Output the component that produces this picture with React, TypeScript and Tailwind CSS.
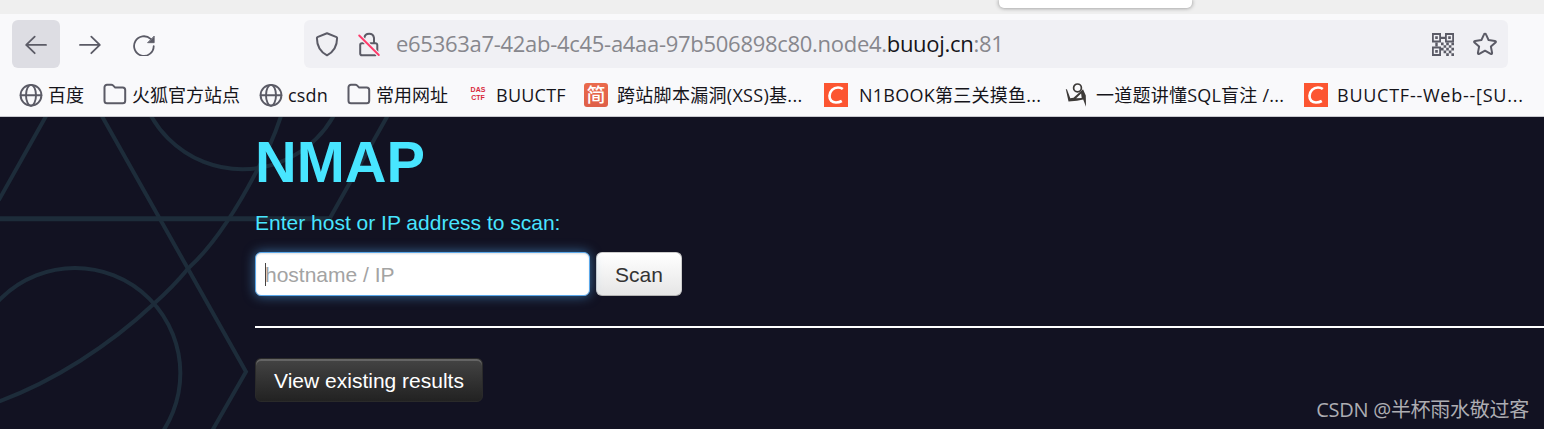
import React from "react";

const stroke = {
  fill: "none",
  stroke: "#5b5b66",
  strokeWidth: 2,
  strokeLinecap: "round" as const,
  strokeLinejoin: "round" as const,
};

const BackIcon = () => (
  <svg width="24" height="24" viewBox="0 0 24 24" {...stroke} strokeWidth={1.8}>
    <path d="M22 12.900H2.200M10.700 4.600L2.200 12.900l8.500 8.300" />
  </svg>
);

const ForwardIcon = () => (
  <svg width="24" height="24" viewBox="0 0 24 24" {...stroke} strokeWidth={1.8}>
    <path d="M2 12.900h19.800M13.300 4.600l8.500 8.300-8.500 8.300" />
  </svg>
);

const ReloadIcon = () => (
  <svg width="24" height="24" viewBox="0 0 24 24" {...stroke} strokeWidth={1.8}>
    <path d="M18.600 6.900A9.800 9.800 0 1 0 21.700 14.200" />
    <path d="M22.200 4.400v6.300h-6.300z" fill="#5b5b66" strokeWidth={0.8} />
  </svg>
);

const ShieldIcon = () => (
  <svg width="24" height="26" viewBox="0 0 24 26" {...stroke}>
    <path d="M12 2.300L21.600 6.100q.5.200.5.800C22.100 14.300 18.500 20.800 12 24.300 5.500 20.800 1.900 14.300 1.900 6.900q0-.6.500-.8z" />
  </svg>
);

const LockIcon = () => (
  <svg width="24" height="26" viewBox="0 0 24 26" {...stroke}>
    <path d="M7 12.200H5a1.800 1.800 0 0 0-1.800 1.800v8.400A1.800 1.800 0 0 0 5 24.200h13.500M13.500 12.200h5a1.800 1.800 0 0 1 1.800 1.800v6.500M7.300 7a4.900 4.900 0 0 1 9.700 0v5" />
    <path d="M2.200 4.500l19.600 19.500" stroke="#f0f0f4" strokeWidth="4" />
    <path d="M2.200 4.500l19.600 19.500" stroke="#ff3b6b" strokeWidth="1.900" />
  </svg>
);

const QrIcon = () => (
  <svg width="22" height="23" viewBox="0 0 22 22" fill="#5b5b66" preserveAspectRatio="none">
    <path
      fillRule="evenodd"
      d="M0 0h9v9H0zM1.800 1.800v5.400h5.400V1.800zM13 0h9v9h-9zM14.800 1.800v5.400h5.400V1.800zM0 13h9v9H0zM1.800 14.800v5.400h5.400v-5.400z"
    />
    <path d="M3.200 3.200h2.600v2.600H3.200zM16.200 3.200h2.600v2.600h-2.600zM3.200 16.200h2.600v2.600H3.200zM9 3.600h4v2.200H9zM3.300 9h2.400v4H3.300z" />
    <path d="M9 9h2.600v2.600H9zM14.200 9h2.600v2.600h-2.600zM19.400 9H22v2.600h-2.600zM11.600 11.600h2.600v2.600h-2.600zM16.800 11.600h2.600v2.600h-2.600zM9 14.200h2.600v2.600H9zM14.200 14.200h2.600v2.600h-2.600zM19.400 14.200H22v2.600h-2.600zM11.600 16.800h2.600v2.600h-2.600zM16.800 16.800h2.600v2.600h-2.600zM14.200 19.400h2.600V22h-2.600zM19.400 19.400H22V22h-2.600z" />
  </svg>
);

const StarIcon = () => (
  <svg width="26" height="26" viewBox="0 0 26 26" {...stroke}>
    <path d="M13 2.800q.8 0 1.100.8l2.500 5.500 6.300.8q1.700.4.600 1.600l-4.600 4.100 1.200 6.300q.1 1.500-1.400 1l-5.700-3.200-5.700 3.200q-1.500.5-1.400-1l1.200-6.300-4.600-4.100q-1.100-1.200.6-1.600l6.300-.8 2.500-5.500q.3-.8 1.100-.8z" />
  </svg>
);

const GlobeIcon = () => (
  <svg width="24" height="24" viewBox="0 0 24 24" {...stroke} strokeWidth={1.9}>
    <circle cx="12" cy="12.300" r="10.400" />
    <ellipse cx="12" cy="12.300" rx="5" ry="10.400" />
    <path d="M1.600 12.300h20.800" />
  </svg>
);

const FolderIcon = () => (
  <svg width="24" height="24" viewBox="0 0 24 24" {...stroke}>
    <path d="M1.500 17.800V4.200a2.500 2.500 0 0 1 2.500-2.500h4.300q1 0 1.700.7l2.200 2.200h7.500a2.500 2.500 0 0 1 2.500 2.500v10.700a2.500 2.500 0 0 1-2.500 2.500H4a2.500 2.500 0 0 1-2.500-2.500z" />
  </svg>
);

const DasIcon = () => (
  <span className="flex h-6 w-6 flex-col items-center justify-center pb-0.5 font-['Liberation_Sans',sans-serif] text-[7px] leading-[8px] font-bold text-[#d8283c]">
    <span>DAS</span>
    <span>CTF</span>
  </span>
);

const JianIcon = () => (
  <span className="flex h-6 w-6 items-center justify-center rounded-[3px] bg-linear-to-b from-[#ea6a4c] to-[#de5f48] pb-0.5 font-['Noto_Sans_CJK_SC',sans-serif] text-[19px] leading-5 font-medium text-white">
    简
  </span>
);

const CIcon = () => (
  <svg width="24" height="24" viewBox="0 0 24 24">
    <path fill="#fc5531" d="M0 0h24v24H0z" />
    <path
      d="M18.800 6C17.500 5 15.800 4.500 14 4.500 9.300 4.500 5.700 8 5.500 12.900 5.400 17 8 19.500 12 19.500c2.300 0 4-.5 5.800-1.500"
      fill="none"
      stroke="#fff"
      strokeWidth="2.700"
    />
  </svg>
);

const FigureIcon = () => (
  <svg width="24" height="24" viewBox="0 0 24 24" fill="none" stroke="#3d3a38">
    <circle cx="13.500" cy="4.900" r="3.900" strokeWidth="1.700" />
    <g fill="#3d3a38" stroke="none">
      <path d="M1.800 6l1.200.5L6.300 15.200l3.200-.5L19 6.200 21.800 12.500 22 23.800l-2.800-7.300-6.200 1.200-8.500.8z" />
      <path d="M12.200 15.300l5.500-.3-.6-4.600z" fill="#f9f9fb" />
    </g>
  </svg>
);

type Bookmark = { label: string; icon: React.ReactNode; box: string; text: string };

const bookmarks: Bookmark[] = [
  { label: "百度", icon: <GlobeIcon />, box: "w-[84px] gap-[5px]", text: "" },
  { label: "火狐官方站点", icon: <FolderIcon />, box: "w-[156px] gap-[5px]", text: "" },
  { label: "csdn", icon: <GlobeIcon />, box: "w-[88px] gap-[5px]", text: "tracking-[0.2px]" },
  { label: "常用网址", icon: <FolderIcon />, box: "w-[119px] gap-[5px]", text: "" },
  { label: "BUUCTF", icon: <DasIcon />, box: "w-[118px] gap-[6px]", text: "tracking-[0.25px]" },
  { label: "跨站脚本漏洞(XSS)基...", icon: <JianIcon />, box: "w-[240px] gap-[9px]", text: "tracking-[0.3px]" },
  { label: "N1BOOK第三关摸鱼...", icon: <CIcon />, box: "w-[240px] gap-[11px]", text: "tracking-[0.25px]" },
  { label: "一道题讲懂SQL盲注 /...", icon: <FigureIcon />, box: "w-[240px] gap-[8px]", text: "tracking-[0.23px]" },
  { label: "BUUCTF--Web--[SU...", icon: <CIcon />, box: "w-[236px] gap-[9px]", text: "tracking-[0.75px]" },
];

const Backdrop = () => (
  <svg
    className="absolute top-0 left-0 blur-[0.7px]"
    width="440"
    height="312"
    viewBox="0 6 1320 936"
    fill="none"
    stroke="#1d2c3a"
    strokeWidth="12"
  >
    <path d="M140 0L-4 256" />
    <path d="M304 0L738 770 636 948" />
    <circle cx="727" cy="-151" r="314" />
    <path d="M844 0Q815 90 768 172C690 320 620 410 565 460Q520 515 460 568C330 690 160 800 -5 860" />
    <path d="M0 311H990" strokeWidth="15" />
    <path d="M990 309L1164 0" />
    <circle cx="225" cy="775" r="316" />
  </svg>
);

export default function App() {
  return (
    <div className="flex h-[429px] w-full flex-col overflow-hidden bg-[#121222]">
      <div className="flex h-[14px] shrink-0 bg-[#efefef] pl-[999px]">
        <div className="h-2 w-[193px] rounded-b-[5px] bg-white shadow-[0_0_4px_rgba(0,0,0,0.45)]" />
      </div>

      <header className="flex h-[103px] shrink-0 flex-col border-b border-[#c9c9cf] bg-[#f9f9fb]">
        <div className="flex h-[60px] items-center pl-3">
          <button className="flex h-12 w-12 items-center justify-center rounded-md bg-[#dddde3]">
            <BackIcon />
          </button>
          <button className="ml-1.5 flex h-12 w-12 items-center justify-center">
            <ForwardIcon />
          </button>
          <button className="ml-1.5 flex h-12 w-12 items-center justify-center">
            <ReloadIcon />
          </button>
          <div className="ml-[136px] flex h-12 w-[1204px] items-center rounded-md bg-[#f0f0f4] pr-2.5 pl-[11px]">
            <ShieldIcon />
            <span className="ml-[18px] flex">
              <LockIcon />
            </span>
            <span className="ml-[15px] flex-1 pb-0.5 font-['Open_Sans','Noto_Sans',sans-serif] text-[22px] tracking-[-0.29px] whitespace-nowrap text-[#87878d]">
              e65363a7-42ab-4c45-a4aa-97b506898c80.node4.<span className="text-[#15141a]">buuoj.cn</span>:81
            </span>
            <QrIcon />
            <span className="ml-[18px] flex">
              <StarIcon />
            </span>
          </div>
        </div>

        <nav className="flex h-[42px] items-center pl-[19px]">
          {bookmarks.map((b) => (
            <div key={b.label} className={`flex shrink-0 items-center ${b.box}`}>
              <span className="flex h-6 w-6 shrink-0 items-center">{b.icon}</span>
              <span className={`font-['Open_Sans','Noto_Sans_CJK_SC',sans-serif] text-[18px] leading-6 whitespace-nowrap text-[#15141a] ${b.text}`}>
                {b.label}
              </span>
            </div>
          ))}
        </nav>
      </header>

      <main className="relative flex flex-1 flex-col bg-[#121222] font-['Liberation_Sans',Arial,sans-serif] text-[21px]">
        <Backdrop />
        <div className="relative flex flex-1 flex-col items-start pl-[255px]">
          <h1 className="mt-[15px] text-[57.75px] leading-[60px] font-bold text-[#48e5ff]">NMAP</h1>
          <label className="mt-4 leading-[30px] text-[#48e5ff]">Enter host or IP address to scan:</label>
          <div className="mt-[14px] flex gap-1.5">
            <div className="relative">
              <input
                placeholder="hostname / IP"
                className="block h-11 w-[335px] rounded-md border border-[#5ba8ea] bg-white px-[9px] pt-0.5 caret-transparent shadow-[inset_0_1px_2px_rgba(0,0,0,0.12),0_0_12px_rgba(82,168,236,0.6)] outline-none placeholder:text-[#a3a3a3]"
              />
              <span className="absolute top-[11px] left-[10px] h-[23px] w-px bg-[#444]" />
            </div>
            <button className="h-11 w-[86px] rounded-md border border-[#ccc] border-b-[#b3b3b3] bg-linear-to-b from-white to-[#e6e6e6] pt-0.5 text-[#333]">
              Scan
            </button>
          </div>
          <hr className="mt-[30px] h-0.5 w-full border-0 bg-white" />
          <button className="mt-[30px] h-11 w-[228px] rounded-md border border-[#2a2a2a] bg-linear-to-b from-[#444] to-[#222] pt-0.5 text-white shadow-[inset_0_2px_0_rgba(255,255,255,0.18)]">
            View existing results
          </button>
        </div>
        <span className="absolute right-[15px] bottom-[5px] font-['Open_Sans','Noto_Sans_CJK_SC',sans-serif] text-[20px] leading-7 tracking-[-0.27px] whitespace-nowrap text-[#adadb2]">
          CSDN @半杯雨水敬过客
        </span>
      </main>
    </div>
  );
}
